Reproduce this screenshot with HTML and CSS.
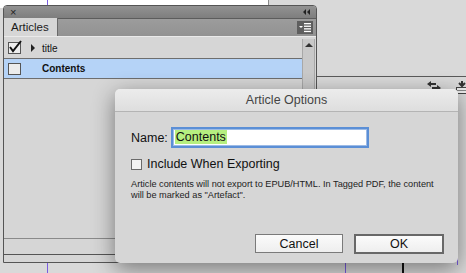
FILE: index.html
```html
<!DOCTYPE html>
<html lang="en">

<head>
    <meta charset="UTF-8">
    <meta name="viewport" content="width=device-width, initial-scale=1.0">
    <title>Article Options</title>

    <link rel="stylesheet" href="styles.css">

</head>

<body>
    <!-- DESKTOP BACKGROUND -->
    <div class="page-strip"></div>
    <div class="page-edge"></div>
    <div class="guide guide-a"></div>
    <div class="guide guide-b"></div>
    <div class="guide guide-c"></div>
    <div class="black-line"></div>
    <div class="rule-line"></div>

    <div class="tool-icons">
        <svg width="15" height="10" viewBox="0 0 15 10">
            <path d="M0 3 L4 0 L4 2 L9 2 L9 4 L4 4 L4 6 Z" fill="#333" />
            <path d="M14 7 L10 4 L10 6 L5 6 L5 8 L10 8 L10 10 Z" fill="#333" />
        </svg>
        <svg width="14" height="13" viewBox="0 0 14 13">
            <path d="M7 0 L7 4 M4 2 L7 5 L10 2" stroke="#333" stroke-width="2" fill="none" />
            <rect x="1.5" y="6.5" width="12" height="6" fill="#eee" stroke="#444" />
            <line x1="1" y1="9.5" x2="14" y2="9.5" stroke="#888" />
        </svg>
    </div>

    <!-- ARTICLES PANEL -->
    <div class="panel">
        <div class="panel-titlebar">
            <span class="close-x">&times;</span>
            <span class="collapse">
                <svg width="8" height="6" viewBox="0 0 8 6">
                    <path d="M0 3 L3 0 L3 6 Z M4 3 L7 0 L7 6 Z" fill="#222" />
                </svg>
            </span>
        </div>

        <div class="panel-tabs">
            <div class="tab">Articles</div>
            <div class="panel-menu">
                <svg width="16" height="13" viewBox="0 0 16 13">
                    <rect width="16" height="13" fill="#5e5e5e" />
                    <path d="M2 5 L6 5 L4 7 Z" fill="#fff" />
                    <rect x="7" y="2" width="7" height="1.3" fill="#fff" />
                    <rect x="7" y="4.6" width="7" height="1.3" fill="#fff" />
                    <rect x="7" y="7.2" width="7" height="1.3" fill="#fff" />
                    <rect x="7" y="9.8" width="7" height="1.3" fill="#fff" />
                </svg>
            </div>
        </div>

        <div class="panel-body">
            <div class="panel-list">
                <div class="row">
                    <span class="check-box">
                        <svg width="16" height="14" viewBox="0 0 16 14">
                            <path d="M3 7 L6 11 L14 1" stroke="#111" stroke-width="2" fill="none" />
                        </svg>
                    </span>
                    <span class="arrow"></span>
                    <span class="row-text">title</span>
                </div>
                <div class="row row-selected">
                    <span class="check-box"></span>
                    <span class="arrow arrow-empty"></span>
                    <span class="row-text row-bold">Contents</span>
                </div>
            </div>
            <div class="scrollbar">
                <span class="scroll-up"></span>
            </div>
        </div>

        <div class="panel-footer"></div>
        <div class="panel-status"></div>
    </div>

    <!-- ARTICLE OPTIONS DIALOG -->
    <div class="dialog">
        <div class="dialog-title">Article Options</div>

        <div class="dialog-body">
            <div class="name-row">
                <label for="name">Name:</label>
                <div class="name-input" id="name"><span class="selected">Contents</span></div>
            </div>

            <div class="include-row">
                <span class="dlg-check"></span>
                <span>Include When Exporting</span>
            </div>

            <p class="note">
                Article contents will not export to EPUB/HTML. In Tagged PDF, the content
                will be marked as "Artefact".
            </p>

            <div class="dialog-buttons">
                <button class="btn">Cancel</button>
                <button class="btn btn-default">OK</button>
            </div>
        </div>
    </div>
</body>

</html>
```

FILE: styles.css
```css
/* RESET */
* {
    margin: 0;
    padding: 0;
    box-sizing: border-box;
    font-family: "Liberation Sans", Arial, Helvetica, sans-serif;
}

/* GERAL */
body {
    width: 466px;
    height: 273px;
    overflow: hidden;
    position: relative;
    background-color: #d9d9d9;
    color: #111;
}

/* DESKTOP BACKGROUND */
.page-strip {
    position: absolute;
    left: 0;
    top: 0;
    width: 268px;
    height: 8px;
    background-color: #fff;
}

.page-edge {
    position: absolute;
    left: 268px;
    top: 0;
    width: 1px;
    height: 8px;
    background-color: #8a8a8a;
}

.guide {
    position: absolute;
    width: 1px;
    background-color: #7a5ce0;
}

.guide-a {
    left: 47px;
    top: 0;
    height: 273px;
}

.guide-b {
    left: 345px;
    top: 120px;
    height: 153px;
}

.guide-c {
    left: 457px;
    top: 95px;
    height: 170px;
}

.black-line {
    position: absolute;
    left: 402px;
    top: 200px;
    width: 2px;
    height: 73px;
    background-color: #111;
}

.rule-line {
    position: absolute;
    left: 316px;
    top: 76px;
    width: 150px;
    height: 1px;
    background-color: #5a5a5a;
}

.tool-icons {
    position: absolute;
    left: 427px;
    top: 81px;
    display: flex;
    gap: 13px;
}

/* ARTICLES PANEL */
.panel {
    position: absolute;
    left: 3px;
    top: 5px;
    width: 314px;
    height: 258px;
    border: 1px solid #555;
    border-radius: 4px 4px 0 0;
    background-color: #d6d6d6;
    display: flex;
    flex-direction: column;
    overflow: hidden;
}

.panel-titlebar {
    height: 13px;
    background: linear-gradient(#929292, #7e7e7e);
    border-bottom: 1px solid #5c5c5c;
    display: flex;
    align-items: center;
    justify-content: space-between;
    padding: 0 5px 0 6px;
}

.close-x {
    font-size: 11px;
    line-height: 11px;
    color: #222;
}

.collapse {
    display: flex;
}

.panel-tabs {
    height: 18px;
    background: linear-gradient(#9c9c9c, #929292);
    border-bottom: 1px solid #eaeaea;
    display: flex;
    justify-content: space-between;
    align-items: center;
}

.tab {
    height: 18px;
    width: 54px;
    background-color: #d6d6d6;
    border-right: 1px solid #6a6a6a;
    font-size: 11.5px;
    line-height: 18px;
    padding-left: 7px;
    color: #1a1a1a;
    align-self: flex-end;
}

.panel-menu {
    display: flex;
    margin-right: 3px;
}

.panel-body {
    flex: 1;
    display: flex;
    padding-top: 1px;
}

.panel-list {
    flex: 1;
}

.row {
    height: 21px;
    display: flex;
    align-items: center;
    border-bottom: 1px solid #6e6e6e;
    padding-left: 4px;
}

.row-selected {
    height: 20px;
    background-color: #b5d3f7;
}

.check-box {
    width: 13px;
    height: 12px;
    border: 1px solid #555;
    background-color: #ececec;
    position: relative;
}

.check-box svg {
    position: absolute;
    left: -2px;
    top: -3px;
}

.arrow {
    width: 0;
    height: 0;
    border-top: 4px solid transparent;
    border-bottom: 4px solid transparent;
    border-left: 4px solid #222;
    margin-left: 10px;
}

.arrow-empty {
    border-left-color: transparent;
}

.row-text {
    margin-left: 7px;
    font-size: 10px;
    color: #111;
}

.row-bold {
    font-weight: bold;
}

.scrollbar {
    width: 13px;
    margin: 1px 1px 0 0;
    background-color: #c9c9c9;
    border-left: 1px solid #a8a8a8;
    border-right: 1px solid #a8a8a8;
    display: flex;
    justify-content: center;
}

.scroll-up {
    margin-top: 4px;
    width: 0;
    height: 0;
    border-left: 4px solid transparent;
    border-right: 4px solid transparent;
    border-bottom: 4px solid #333;
}

.panel-footer {
    height: 17px;
    border-top: 1px solid #8a8a8a;
    border-bottom: 1px solid #555;
}

.panel-status {
    height: 7px;
}

/* ARTICLE OPTIONS DIALOG */
.dialog {
    position: absolute;
    left: 115px;
    top: 89px;
    width: 343px;
    height: 174px;
    background-color: #d6d6d6;
    border-radius: 5px;
    box-shadow: 0 6px 22px rgba(0, 0, 0, 0.45);
    overflow: hidden;
}

.dialog-title {
    height: 23px;
    background: linear-gradient(#ececec, #dedede);
    border-bottom: 1px solid #b4b4b4;
    text-align: center;
    font-size: 12.5px;
    line-height: 23px;
    color: #444;
}

.dialog-body {
    padding: 15px 14px 0 16px;
}

.name-row {
    display: flex;
    align-items: center;
    font-size: 12.5px;
}

.name-input {
    margin-left: 3px;
    width: 198px;
    height: 21px;
    background-color: #fff;
    border: 2px solid #5b8fd6;
    box-shadow: inset 0 0 0 1px #9dbbe6;
    padding: 1px 2px;
    font-size: 12.5px;
    line-height: 15px;
}

.selected {
    background-color: #b6ef80;
    padding: 0 1px;
}

.include-row {
    display: flex;
    align-items: center;
    margin-top: 9px;
    font-size: 12.5px;
}

.dlg-check {
    width: 11px;
    height: 11px;
    border: 1px solid #6a6a6a;
    background-color: #f2f2f2;
    margin-right: 5px;
}

.note {
    margin-top: 8px;
    font-size: 9.2px;
    line-height: 11px;
    color: #222;
}

.dialog-buttons {
    display: flex;
    justify-content: flex-end;
    gap: 11px;
    margin-top: 33px;
}

.btn {
    width: 88px;
    height: 19px;
    background: linear-gradient(#fbfbfb, #eeeeee);
    border: 1px solid #7a7a7a;
    font-size: 12.5px;
    color: #111;
}

.btn-default {
    width: 90px;
    height: 20px;
    border: 2px solid #686868;
}
```
